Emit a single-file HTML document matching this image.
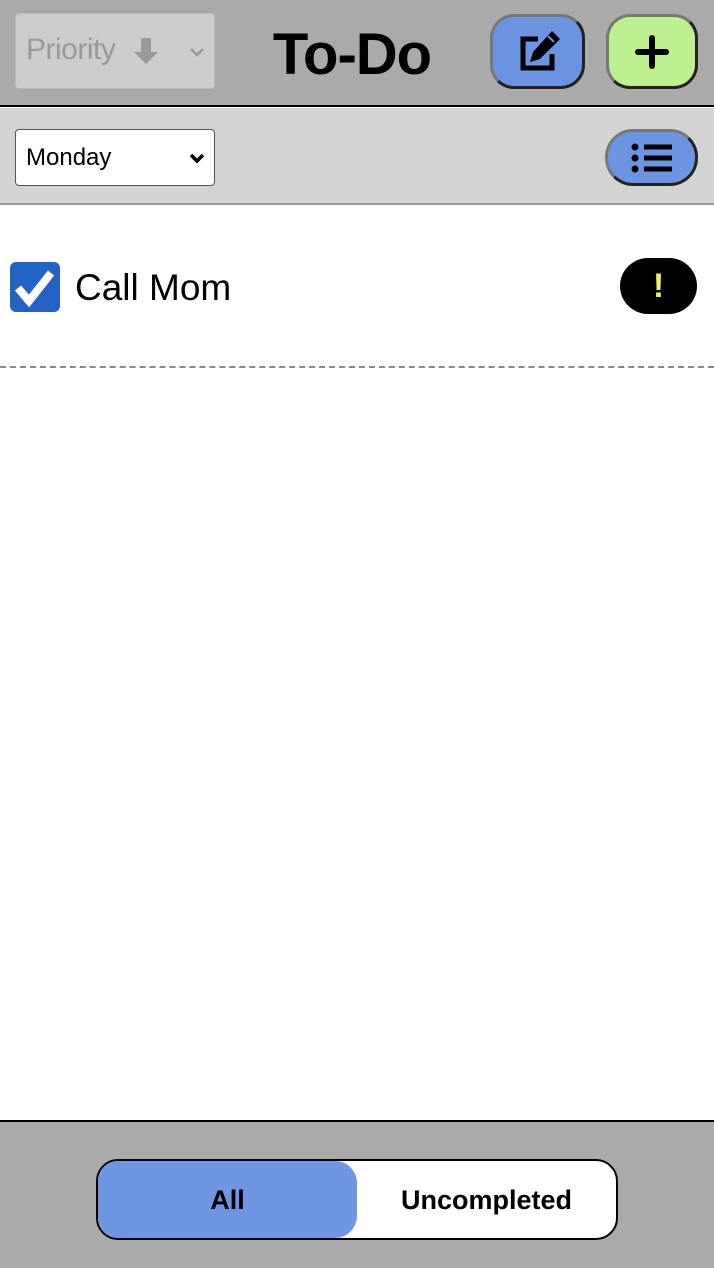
<!DOCTYPE html>
<html><head><meta charset="utf-8"><style>
*{box-sizing:border-box;margin:0;padding:0}
body{width:714px;height:1268px;position:relative;background:#fff;font-family:"Liberation Sans",Arial,sans-serif;overflow:hidden}
.abs{position:absolute}
.hdr{left:0;top:0;width:714px;height:107px;background:#aaa;border-bottom:2px solid #000}
.sub{left:0;top:108px;width:714px;height:97px;background:#d3d3d3;border-bottom:2px solid #999}
.btn{border-style:solid;border-width:3px;border-color:#777 #222 #222 #777;display:flex;align-items:center;justify-content:center}
.ftr{left:0;top:1120px;width:714px;height:148px;background:#aaa;border-top:2px solid #000}
</style></head><body>
<div class="abs hdr"></div>
<div class="abs" style="left:15px;top:13px;width:200px;height:76px;background:#ccc;border:1px solid #bbb;border-radius:4px;color:#999;font-size:30px;">
  <span class="abs" style="left:10px;top:19px;letter-spacing:-0.5px">Priority</span>
  <svg class="abs" style="left:117px;top:22px" width="26" height="30" viewBox="0 0 26 30"><path d="M8 2h10v14h7L13 28 1 16h7z" fill="#999"/></svg>
  <svg class="abs" style="left:172px;top:32px" width="18" height="12" viewBox="0 0 18 12"><path d="M3 3l6 6 6-6" stroke="#999" stroke-width="2.5" fill="none"/></svg>
</div>
<div class="abs" style="left:252px;top:21px;width:200px;text-align:center;font-size:58px;font-weight:bold;letter-spacing:-1px">To-Do</div>
<div class="abs btn" style="left:490px;top:14px;width:95px;height:75px;background:#6b95e3;border-radius:24px">
  <svg width="48" height="46" viewBox="0 0 48 46"><path d="M24 10H9v29h29V25" stroke="#000" stroke-width="5" fill="none"/><path d="M38 2l8 8-20 20-10 3 3-10z" fill="#000"/><path d="M34 7l6 6" stroke="#6b95e3" stroke-width="2"/></svg>
</div>
<div class="abs btn" style="left:606px;top:14px;width:92px;height:75px;background:#bdf08f;border-radius:24px">
  <svg width="34" height="34" viewBox="0 0 34 34"><path d="M17 3v28M3 17h28" stroke="#000" stroke-width="6" stroke-linecap="round"/></svg>
</div>
<div class="abs sub"></div>
<div class="abs" style="left:15px;top:129px;width:200px;height:57px;background:#fff;border:1px solid #555;border-radius:4px;font-size:24px">
  <span class="abs" style="left:10px;top:14px">Monday</span>
  <svg class="abs" style="left:172px;top:22px" width="18" height="12" viewBox="0 0 18 12"><path d="M3 3l6 6 6-6" stroke="#000" stroke-width="3.5" fill="none"/></svg>
</div>
<div class="abs btn" style="left:605px;top:129px;width:93px;height:57px;background:#6b95e3;border-radius:28px">
  <svg width="44" height="34" viewBox="0 0 44 34"><circle cx="5" cy="6" r="3.5"/><circle cx="5" cy="17" r="3.5"/><circle cx="5" cy="28" r="3.5"/><path d="M14 6h28M14 17h28M14 28h28" stroke="#000" stroke-width="5"/></svg>
</div>
<div class="abs" style="left:10px;top:262px;width:50px;height:50px;background:#2462c8;border-radius:6px">
  <svg width="50" height="50" viewBox="0 0 50 50"><path d="M8 26l11 13 22-28" stroke="#fff" stroke-width="8" fill="none"/></svg>
</div>
<div class="abs" style="left:75px;top:267px;font-size:37px">Call Mom</div>
<div class="abs" style="left:620px;top:258px;width:77px;height:56px;background:#000;border-radius:28px;color:#f0f060;font-size:34px;font-weight:bold;text-align:center;line-height:56px">!</div>
<div class="abs" style="left:0;top:366px;width:714px;border-top:2px dashed #888"></div>
<div class="abs ftr"></div>
<div class="abs" style="left:96px;top:1159px;width:522px;height:81px;background:#fff;border:2px solid #000;border-radius:22px;overflow:hidden">
  <div class="abs" style="left:0;top:0;width:259px;height:77px;background:#6e96e3;border-radius:0 22px 22px 0;"></div>
  <div class="abs" style="left:0;top:24px;width:259px;text-align:center;font-size:27px;font-weight:bold">All</div>
  <div class="abs" style="left:259px;top:24px;width:259px;text-align:center;font-size:27px;font-weight:bold">Uncompleted</div>
</div>
</body></html>
